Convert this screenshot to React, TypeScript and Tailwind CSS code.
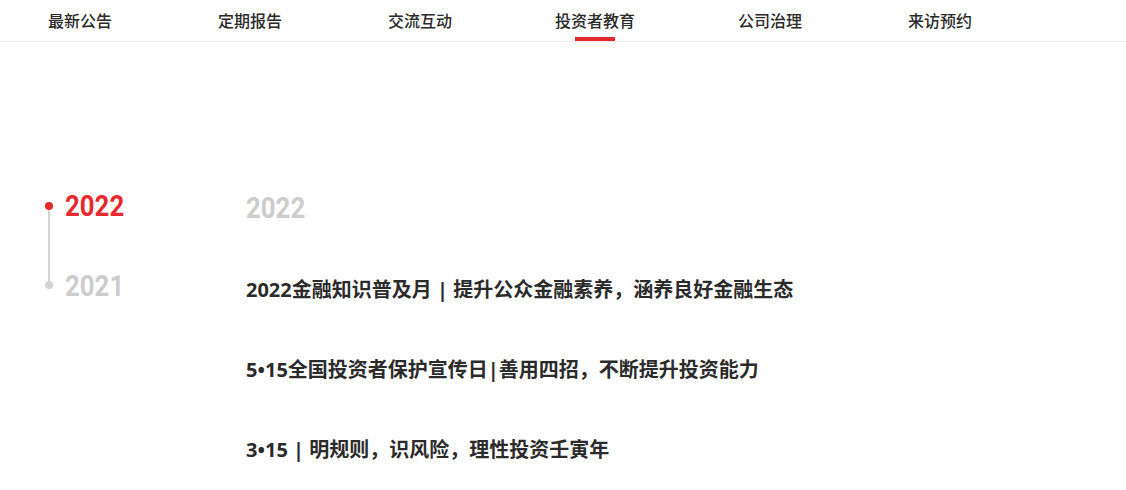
import React from "react";

const navItems = ["最新公告", "定期报告", "交流互动", "投资者教育", "公司治理", "来访预约"];
const titles = [
  "2022金融知识普及月 | 提升公众金融素养，涵养良好金融生态",
  "5•15全国投资者保护宣传日|善用四招，不断提升投资能力",
  "3•15 | 明规则，识风险，理性投资壬寅年",
];

const yearFont = { fontFamily: 'Roboto, "Liberation Sans", sans-serif' };

export default function App() {
  return (
    <div className="w-[1126px] h-[490px] bg-white overflow-hidden" style={{ fontFamily: '"Noto Sans CJK SC", "Noto Sans", sans-serif' }}>
      <nav className="h-[42px] border-b border-[#ececec] flex items-stretch pl-[48px]">
        {navItems.map((item, i) => (
          <div
            key={item}
            className={
              "relative flex items-center text-[16px] font-medium text-[#2a2a2a] leading-none " +
              (i === 0 ? "" : i === 3 || i === 4 ? "ml-[103px]" : "ml-[106px]")
            }
          >
            <span className="-mt-[1px]">{item}</span>
            {i === 3 && (
              <span className="absolute bottom-0 left-1/2 -translate-x-1/2 w-[40px] h-[4px] bg-[#e42a2e]" />
            )}
          </div>
        ))}
      </nav>
      <div className="flex items-start pt-[149px] pl-[45px]">
        <div className="flex items-start w-[201px]">
          <div className="flex flex-col items-center mt-[11px] w-[8px]">
            <span className="w-[8px] h-[8px] rounded-full bg-[#e42a2e]" />
            <span className="w-[2px] h-[71px] bg-[#d4d4d4]" />
            <span className="w-[8px] h-[8px] rounded-full bg-[#d4d4d4]" />
          </div>
          <div className="flex flex-col gap-[50px] ml-[12px]" style={yearFont}>
            <span className="block h-[30px] leading-[30px] text-[30px] font-bold text-[#e42a2e] scale-x-[0.86] origin-left">2022</span>
            <span className="block h-[30px] leading-[30px] text-[30px] font-bold text-[#cccccc] scale-x-[0.86] origin-left">2021</span>
          </div>
        </div>
        <div className="flex flex-col mt-[2px]">
          <span className="block h-[30px] leading-[30px] text-[30px] font-bold text-[#cccccc] scale-x-[0.86] origin-left" style={yearFont}>2022</span>
          <div className="flex flex-col gap-[50px] mt-[52px]" style={{ fontFamily: '"Open Sans", "Noto Sans CJK SC", sans-serif' }}>
            {titles.map((t) => (
              <div key={t} className="h-[30px] leading-[30px] text-[20px] font-bold text-[#2b2b2b] whitespace-nowrap">
                {t}
              </div>
            ))}
          </div>
        </div>
      </div>
    </div>
  );
}
